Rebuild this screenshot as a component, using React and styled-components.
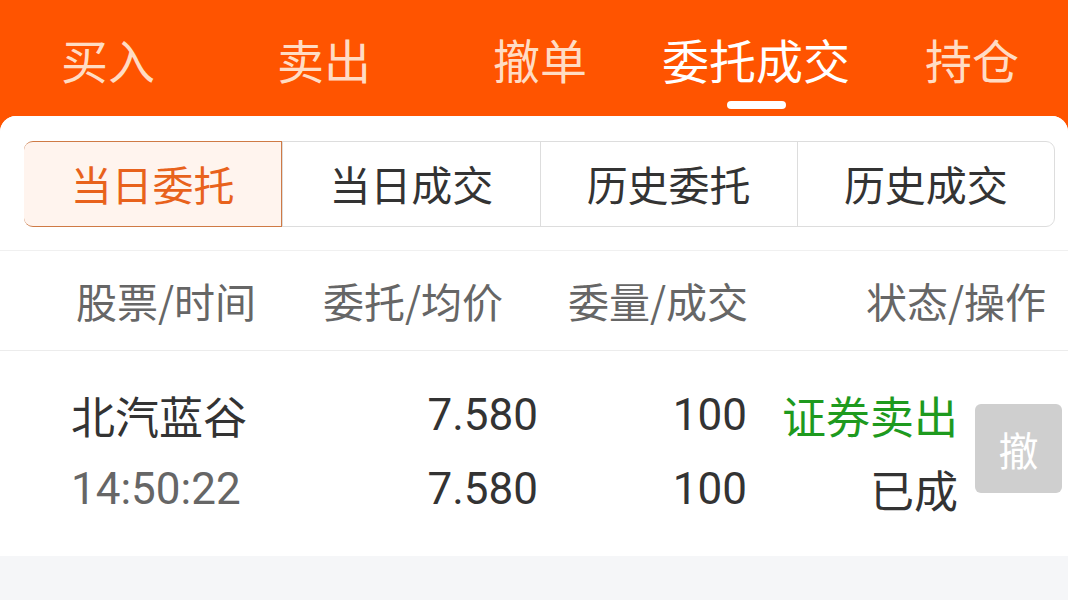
import React from "react";
import styled, { createGlobalStyle } from "styled-components";

const GlobalStyle = createGlobalStyle`
  html, body {
    margin: 0;
    padding: 0;
    background: #ff5400;
  }
  body {
    font-family: Roboto, "Noto Sans CJK SC", "Noto Sans", sans-serif;
  }
`;

const Page = styled.div`
  width: 1068px;
  height: 600px;
  overflow: hidden;
  display: flex;
  flex-direction: column;
  background: #ff5400;
`;

/* top tab bar */
const TopBar = styled.div`
  height: 116px;
  display: grid;
  grid-template-columns: repeat(5, 216px);
  flex-shrink: 0;
`;

const TopTab = styled.div`
  position: relative;
  display: flex;
  justify-content: center;
  padding-top: 30px;
  font-size: 47px;
  line-height: 58px;
  color: ${(p) => (p.$active ? "#ffffff" : "#ffdcc4")};
  font-family: "Noto Sans CJK SC", sans-serif;
`;

const Indicator = styled.span`
  position: absolute;
  left: 50%;
  top: 101px;
  width: 59px;
  height: 8px;
  margin-left: -29px;
  border-radius: 4px;
  background: #ffffff;
`;

const Card = styled.div`
  flex: 1;
  display: flex;
  flex-direction: column;
  background: #f5f6f8;
  border-radius: 16px 16px 0 0;
  overflow: hidden;
`;

const Panel = styled.div`
  background: #ffffff;
`;

/* segmented control */
const Segments = styled.div`
  display: grid;
  grid-template-columns: repeat(4, 1fr);
  margin: 25px 13px 0 24px;
  height: 86px;
  border: 1px solid #dddddd;
  border-radius: 9px;
  box-sizing: border-box;
`;

const Segment = styled.div`
  display: flex;
  align-items: center;
  justify-content: center;
  padding-bottom: 2px;
  font-family: "Noto Sans CJK SC", sans-serif;
  font-size: 41px;
  color: ${(p) => (p.$active ? "#e8621c" : "#333333")};
  background: ${(p) => (p.$active ? "#fff4ee" : "transparent")};
  border-left: 1px solid #dddddd;
  margin: -1px 0;
  &:first-child {
    border-left: none;
  }
  ${(p) =>
    p.$active &&
    `
    margin: -1px 0 -1px -1px;
    border: 1px solid #cf7a45;
    border-radius: 9px 0 0 9px;
  `}
`;

/* table */
const HeaderRow = styled.div`
  margin-top: 23px;
  height: 99px;
  display: grid;
  grid-template-columns: 247px 241px 184px 1fr;
  align-items: center;
  padding: 0 22px 0 76px;
  border-top: 1px solid #f0f0f0;
  border-bottom: 1px solid #ececec;
  font-family: "Noto Sans CJK SC", sans-serif;
  font-size: 41px;
  color: #666666;
`;

const HeadCell = styled.div`
  text-align: ${(p) => p.$align || "left"};
  white-space: nowrap;
  margin-top: -2px;
`;

const DataRow = styled.div`
  height: 205px;
  display: grid;
  grid-template-columns: 260px 207px 209px 211px 87px;
  align-items: center;
  padding: 0 4px 0 71px;
`;

const Stack = styled.div`
  display: flex;
  flex-direction: column;
  gap: 16px;
  align-items: ${(p) => (p.$right ? "flex-end" : "flex-start")};
  margin-top: -4px;
`;

const Line = styled.div`
  font-size: 44px;
  line-height: 58px;
  white-space: nowrap;
  color: ${(p) => p.$color || "#333333"};
  font-family: ${(p) =>
    p.$cjk ? `"Noto Sans CJK SC", sans-serif` : `Roboto, "Noto Sans CJK SC", sans-serif`};
`;

const CancelButton = styled.div`
  margin-left: 17px;
  margin-top: -10px;
  width: 87px;
  height: 89px;
  display: flex;
  align-items: center;
  justify-content: center;
  border-radius: 6px;
  background: #cfcfcf;
  color: #ffffff;
  font-family: "Noto Sans CJK SC", sans-serif;
  font-size: 40px;
`;

const topTabs = ["买入", "卖出", "撤单", "委托成交", "持仓"];
const segments = ["当日委托", "当日成交", "历史委托", "历史成交"];

export default function App() {
  return (
    <Page>
      <GlobalStyle />
      <TopBar>
        {topTabs.map((t, i) => (
          <TopTab key={t} $active={i === 3}>
            {t}
            {i === 3 && <Indicator />}
          </TopTab>
        ))}
      </TopBar>
      <Card>
        <Panel>
          <Segments>
            {segments.map((s, i) => (
              <Segment key={s} $active={i === 0}>
                {s}
              </Segment>
            ))}
          </Segments>
          <HeaderRow>
            <HeadCell>股票/时间</HeadCell>
            <HeadCell>委托/均价</HeadCell>
            <HeadCell $align="right">委量/成交</HeadCell>
            <HeadCell $align="right">状态/操作</HeadCell>
          </HeaderRow>
          <DataRow>
            <Stack>
              <Line $cjk>北汽蓝谷</Line>
              <Line $color="#666666">14:50:22</Line>
            </Stack>
            <Stack $right>
              <Line>7.580</Line>
              <Line>7.580</Line>
            </Stack>
            <Stack $right>
              <Line>100</Line>
              <Line>100</Line>
            </Stack>
            <Stack $right>
              <Line $cjk $color="#1e9a1e">证券卖出</Line>
              <Line $cjk>已成</Line>
            </Stack>
            <CancelButton>撤</CancelButton>
          </DataRow>
        </Panel>
      </Card>
    </Page>
  );
}
